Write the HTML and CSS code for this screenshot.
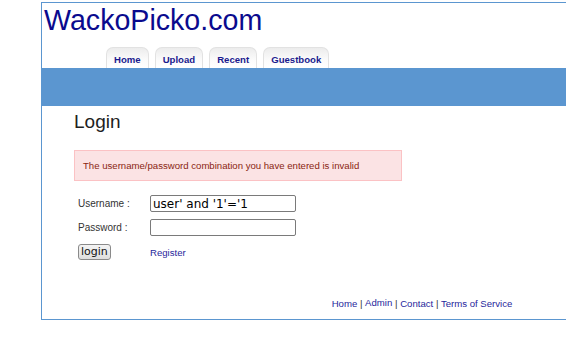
FILE: index.html
```html
<!DOCTYPE html>
<html>
<head>
<meta charset="utf-8">
<title>WackoPicko.com</title>
<link rel="stylesheet" href="styles.css">
</head>
<body>
<div class="container">
  <div class="header">
    <div class="logo">WackoPicko.com</div>
    <ul class="tabs">
      <li class="tab">Home</li>
      <li class="tab">Upload</li>
      <li class="tab">Recent</li>
      <li class="tab">Guestbook</li>
    </ul>
  </div>
  <div class="band"></div>
  <div class="content">
    <h2 class="title">Login</h2>
    <div class="error">The username/password combination you have entered is invalid</div>
    <div class="form">
      <div class="row">
        <label class="label">Username :</label>
        <input class="field" type="text" value="user' and '1'='1">
      </div>
      <div class="row">
        <label class="label">Password :</label>
        <input class="field" type="password" value="">
      </div>
      <div class="row">
        <div class="label"><button class="btn">login</button></div>
        <a class="reg" href="#">Register</a>
      </div>
    </div>
  </div>
  <div class="footer">
    <a href="#">Home</a> | <span class="admin">Admin</span> | <a href="#">Contact</a> | <a href="#">Terms of Service</a>
  </div>
</div>
</body>
</html>
```
FILE: styles.css
```css
html, body {
  margin: 0;
  padding: 0;
  overflow: hidden;
  background: #fff;
}
body {
  font-family: "Liberation Sans", Arial, sans-serif;
}
.container {
  margin: 2px 0 0 41px;
  width: 760px;
  border: 1px solid #5b96d0;
}
.header {
  height: 65px;
  display: flex;
  flex-direction: column;
}
.logo {
  font-size: 28.6px;
  line-height: 32px;
  color: #0a0a8e;
  padding: 1px 0 0 2px;
}
.tabs {
  list-style: none;
  margin: auto 0 0 0;
  padding: 0 0 0 64px;
  display: flex;
  gap: 6px;
}
.tab {
  height: 21px;
  box-sizing: border-box;
  padding: 6px 7px 0;
  font-size: 9.6px;
  font-weight: bold;
  color: #1a1a8e;
  background: linear-gradient(#ececec, #fbfbfb 60%, #ffffff);
  border: 1px solid #e2e2e2;
  border-bottom: none;
  border-radius: 7px 7px 0 0;
}
.band {
  height: 38px;
  background: #5b96d0;
}
.content {
  padding: 5px 0 0 32px;
}
.title {
  margin: 0;
  font-size: 19px;
  font-weight: normal;
  line-height: 22px;
  color: #1e1e1e;
}
.error {
  margin-top: 17px;
  height: 29px;
  box-sizing: content-box;
  padding: 0 0 0 8px;
  width: 318px;
  display: flex;
  align-items: center;
  background: #fbe3e4;
  border: 1px solid #fbc2c4;
  color: #8a1f11;
  font-size: 9.6px;
}
.form {
  margin-top: 14px;
  display: flex;
  flex-direction: column;
  gap: 7px;
}
.row {
  display: flex;
  align-items: center;
  height: 17px;
}
.label {
  width: 72px;
  padding-left: 4px;
  font-size: 10px;
  color: #333;
}
.field {
  width: 146px;
  height: 17px;
  box-sizing: border-box;
  margin: 0;
  padding: 0 2px;
  border: 1px solid #7a7a7a;
  border-radius: 2px;
  font-family: "DejaVu Sans", sans-serif;
  font-size: 12px;
  color: #000;
}
.btn {
  height: 16px;
  margin: 0;
  padding: 0 2px;
  font-family: "DejaVu Sans", sans-serif;
  font-size: 11px;
  line-height: 12px;
  color: #111;
  background: linear-gradient(#f4f4f4, #dedede);
  border: 1px solid #8a8a8a;
  border-radius: 3px;
}
.reg {
  font-size: 9.6px;
  color: #1f1f9c;
  text-decoration: none;
  padding-top: 2px;
}
.footer {
  margin-top: 37px;
  height: 22px;
  text-align: center;
  font-size: 9.6px;
  color: #333;
}
.footer a {
  color: #1f1f9c;
  text-decoration: none;
}
.admin {
  color: #1f1f9c;
  vertical-align: 1px;
}
```
